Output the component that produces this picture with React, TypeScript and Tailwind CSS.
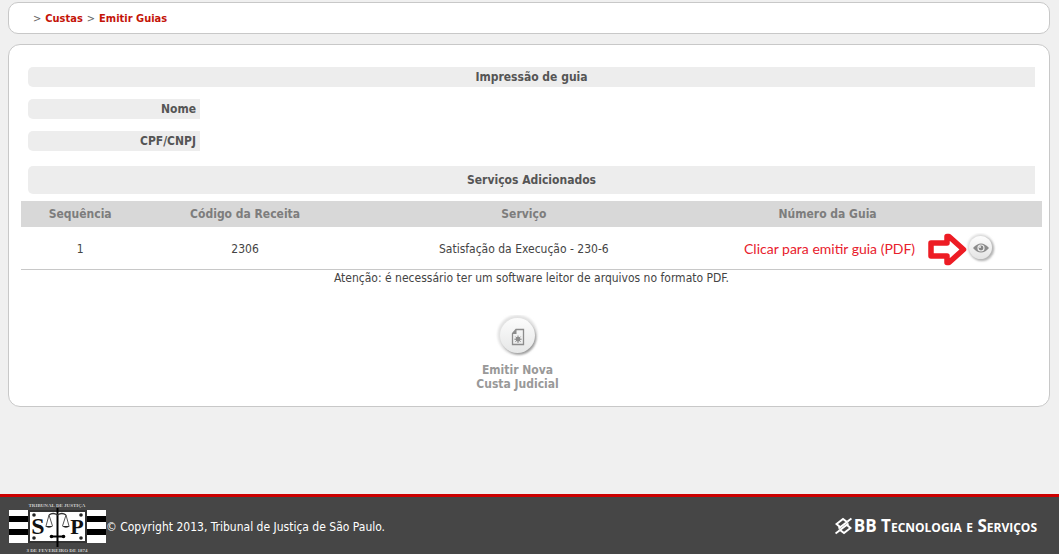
type Servico = {
  sequencia: number;
  codigo: string;
  servico: string;
};

const servicos: Servico[] = [
  { sequencia: 1, codigo: "2306", servico: "Satisfação da Execução - 230-6" },
];

const Breadcrumb = () => {
  return (
    <nav className="flex h-8 items-center gap-1 rounded-[10px] border border-[#c8c8c8] bg-white pl-6 pt-[2px] text-[11px] text-[#666]">
      <span>&gt;</span>
      <a href="#custas" className="font-bold text-[#c41408]">
        Custas
      </a>
      <span>&gt;</span>
      <a href="#emitir" className="font-bold text-[#c41408]">
        Emitir Guias
      </a>
    </nav>
  );
};

const EyeButton = () => {
  return (
    <button type="button" aria-label="Emitir guia em PDF" className="block">
      <svg width="30" height="30" viewBox="0 0 30 30">
        <defs>
          <linearGradient id="eyeFace" x1="0" y1="0" x2="0" y2="1">
            <stop offset="0" stopColor="#fdfdfd" />
            <stop offset="1" stopColor="#e4e4e4" />
          </linearGradient>
          <filter id="soft" x="-20%" y="-20%" width="140%" height="140%">
            <feGaussianBlur stdDeviation="1" />
          </filter>
        </defs>
        <circle cx="14.5" cy="14" r="13" fill="#dedede" filter="url(#soft)" />
        <circle cx="16" cy="16" r="12" fill="#b4b4b4" filter="url(#soft)" />
        <circle cx="14.5" cy="14.5" r="11.5" fill="url(#eyeFace)" />
        <path d="M7 15Q15 6 23 15Q15 24 7 15Z" fill="#8b8b8b" />
        <circle cx="15" cy="15" r="3.6" fill="#eee" />
        <circle cx="15" cy="15" r="2.4" fill="#858585" />
        <circle cx="14" cy="14" r="1" fill="#eee" />
      </svg>
    </button>
  );
};

const NovaCustaIcon = () => {
  return (
    <svg width="44" height="44" viewBox="0 0 44 44">
      <defs>
        <linearGradient id="novaFace" x1="0" y1="0" x2="0" y2="1">
          <stop offset="0" stopColor="#fcfcfc" />
          <stop offset="1" stopColor="#e6e7e7" />
        </linearGradient>
        <filter id="novaSoft" x="-20%" y="-20%" width="140%" height="140%">
          <feGaussianBlur stdDeviation="1.2" />
        </filter>
      </defs>
      <circle cx="22.5" cy="20" r="20" fill="#e2e2e2" filter="url(#novaSoft)" />
      <circle cx="24" cy="22.5" r="17" fill="#999" filter="url(#novaSoft)" />
      <circle cx="22.5" cy="20.5" r="17.5" fill="url(#novaFace)" />
      <path d="M21 14.5H28.5V29.5H17.500V18.5Z" fill="none" stroke="#8c8c8c" strokeWidth="1.3" />
      <path d="M21.500 14.500V19H17Z" fill="#8c8c8c" />
      <path
        d="M23 20.500V28M19.300 24.200H26.700M20.400 21.600L25.600 26.800M25.600 21.600L20.400 26.800"
        stroke="#8c8c8c"
        strokeWidth="1"
      />
      <circle cx="23" cy="24.200" r="2.4" fill="#8c8c8c" />
    </svg>
  );
};

const TribunalLogo = () => {
  return (
    <svg width="98" height="52" viewBox="0 0 98 52" className="font-['Liberation_Serif',serif]">
      <text x="49" y="7" textAnchor="middle" fontSize="5" fontWeight="bold" fill="#ccc">
        TRIBUNAL DE JUSTIÇA
      </text>
      <rect x="1" y="10" width="97" height="33" fill="#fff" />
      <rect x="1" y="16" width="97" height="6" fill="#000" />
      <rect x="1" y="29" width="97" height="6" fill="#000" />
      <rect x="21" y="11" width="57" height="31" fill="#fff" stroke="#333" strokeWidth="2" />
      <g fill="#222">
        <circle cx="26" cy="15" r="1.800" />
        <circle cx="73" cy="15" r="1.800" />
        <circle cx="26" cy="38" r="1.800" />
        <circle cx="73" cy="38" r="1.800" />
      </g>
      <text x="30" y="34" textAnchor="middle" fontSize="24" fontWeight="bold" fill="#111">
        S
      </text>
      <text x="69" y="34" textAnchor="middle" fontSize="22" fontWeight="bold" fill="#111">
        P
      </text>
      <path d="M49.500 8V47" stroke="#000" strokeWidth="2" />
      <path d="M41 15Q45 12 49.500 15Q54 12 58 15" fill="none" stroke="#333" strokeWidth="1.300" />
      <path
        d="M41 15L38 26M41 15L44.500 26M58 15L54.500 26M58 15L61 26"
        stroke="#555"
        strokeWidth="1"
      />
      <path d="M37 26H45Q41 29.500 37 26ZM54 26H62Q58 29.500 54 26Z" fill="#222" />
      <path d="M43 36.500H56" stroke="#000" strokeWidth="2" />
      <circle cx="43.500" cy="36.500" r="1.800" />
      <circle cx="55.500" cy="36.500" r="1.800" />
      <text x="49" y="52" textAnchor="middle" fontSize="5" fontWeight="bold" fill="#ccc">
        3 DE FEVEREIRO DE 1874
      </text>
    </svg>
  );
};

const BancoLogo = () => {
  return (
    <svg width="17" height="18" viewBox="0 0 17 18" fill="none" stroke="#fff" strokeWidth="2">
      <path d="M5 10L1.500 7L8 2L12 5L3.500 11.500" />
      <path d="M12 8L15.500 11L9 16L5 13L13.500 6.500" />
      <path d="M12.500 4.500L16.500 1.500M4.500 13.500L0.500 16.500" />
    </svg>
  );
};

const SectionTitle = ({ children, tall }: { children: string; tall?: boolean }) => {
  return (
    <h2
      className={`mx-[7px] flex items-center justify-center rounded-l-[5px] bg-[#ededed] font-bold text-[#555] ${
        tall ? "h-7" : "h-5"
      }`}
    >
      {children}
    </h2>
  );
};

const App = () => {
  return (
    <div className="flex min-h-screen flex-col bg-[#f0f0f0] font-['DejaVu_Sans_Condensed','DejaVu_Sans',sans-serif] text-[12px] leading-[14px] text-[#444]">
      <main className="ml-2 mr-[9px] flex flex-1 flex-col gap-[10px] pt-[2px]">
        <Breadcrumb />
        <section className="rounded-[12px] border border-[#c8c8c8] bg-white pb-[15px] pl-3 pr-[7px] pt-[22px]">
          <SectionTitle>Impressão de guia</SectionTitle>
          <dl className="ml-[7px] mt-3 mb-[15px] flex w-[172px] flex-col gap-3 text-right font-bold text-[#555]">
            <dt className="h-5 rounded-l-[5px] bg-[#ededed] pr-1 leading-5">Nome</dt>
            <dt className="h-5 rounded-l-[5px] bg-[#ededed] pr-1 leading-5">CPF/CNPJ</dt>
          </dl>
          <SectionTitle tall>Serviços Adicionados</SectionTitle>

          <table className="mt-[7px] w-full table-fixed text-center">
            <thead className="h-[26px] bg-[#d8d8d8] text-[#7d7d7d]">
              <tr>
                <th className="w-[11.6%]">Sequência</th>
                <th className="w-[20.7%]">Código da Receita</th>
                <th className="w-[33.9%]">Serviço</th>
                <th className="w-[25.6%]">Número da Guia</th>
                <th aria-label="Ações" />
              </tr>
            </thead>
            <tbody>
              {servicos.map((s) => (
                <tr key={s.sequencia} className="h-[42px] border-b border-[#c8c8c8]">
                  <td className="pt-[2px]">{s.sequencia}</td>
                  <td className="pt-[2px]">{s.codigo}</td>
                  <td className="pt-[2px]">{s.servico}</td>
                  <td className="relative pl-1 pt-[2px] font-[Lato,sans-serif] text-[14px] text-[#e8202c]">
                    Clicar para emitir guia (PDF)
                    <svg
                      className="absolute -right-[9px] top-[6px]"
                      width="39"
                      height="33"
                      viewBox="0 0 39 33"
                    >
                      <path
                        d="M3 10H19V3.500H21L35.500 16.500L21 29.500H19V23H3Z"
                        fill="#fff"
                        stroke="#ed1c24"
                        strokeWidth="5.5"
                        strokeLinejoin="round"
                      />
                    </svg>
                  </td>
                  <td className="pl-2">
                    <EyeButton />
                  </td>
                </tr>
              ))}
            </tbody>
          </table>
          <p className="pt-[1px] text-center">
            Atenção: é necessário ter um software leitor de arquivos no formato PDF.
          </p>
          <div className="mt-[30px] flex justify-center pr-7">
            <button type="button" className="flex flex-col items-center font-bold text-[#999]">
              <NovaCustaIcon />
              <span className="mt-1">
                Emitir Nova
                <br />
                Custa Judicial
              </span>
            </button>
          </div>
        </section>
      </main>

      <footer className="flex h-[60px] items-center justify-between border-t-[3px] border-[#cc0000] bg-[#464646] pl-2 pr-[22px] text-white">
        <div className="flex items-center">
          <TribunalLogo />
          <span className="pt-[2px]">© Copyright 2013, Tribunal de Justiça de São Paulo.</span>
        </div>
        <div className="flex items-center gap-[2px] font-['Open_Sans',sans-serif] text-[17px] font-bold [font-variant:small-caps]">
          <BancoLogo />
          <span>BB Tecnologia e Serviços</span>
        </div>
      </footer>
    </div>
  );
};

export default App;
